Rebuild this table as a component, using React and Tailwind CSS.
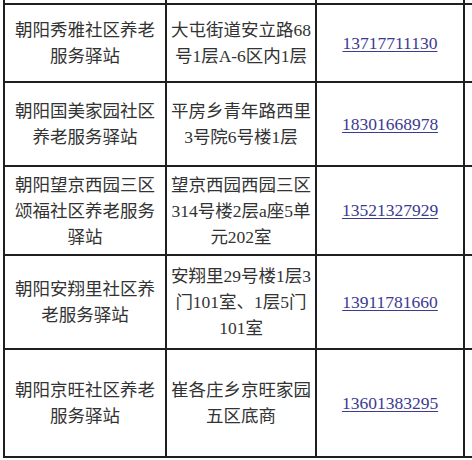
import React from "react";

const rows = [
  {
    h: "h-[78px]",
    name: ["朝阳秀雅社区养老", "服务驿站"],
    addr: ["大屯街道安立路68", "号1层A-6区内1层"],
    phone: "13717711130",
  },
  {
    h: "h-[84px]",
    name: ["朝阳国美家园社区", "养老服务驿站"],
    addr: ["平房乡青年路西里", "3号院6号楼1层"],
    phone: "18301668978",
  },
  {
    h: "h-[89px]",
    name: ["朝阳望京西园三区", "颂福社区养老服务", "驿站"],
    addr: ["望京西园西园三区", "314号楼2层a座5单", "元202室"],
    phone: "13521327929",
  },
  {
    h: "h-[94px]",
    name: ["朝阳安翔里社区养", "老服务驿站"],
    addr: ["安翔里29号楼1层3", "门101室、1层5门", "101室"],
    phone: "13911781660",
  },
  {
    h: "h-[108px]",
    name: ["朝阳京旺社区养老", "服务驿站"],
    addr: ["崔各庄乡京旺家园", "五区底商"],
    phone: "13601383295",
  },
];

const cell = "border-l-2 border-b-2 border-[#1f1f1f] flex flex-col items-center justify-center text-center";

function Lines({ lines }) {
  return lines.map((l, i) => (
    <div key={i} className="whitespace-nowrap leading-[26px]">
      {l}
    </div>
  ));
}

export default function App() {
  return (
    <div
      className="w-[472px] h-[460px] bg-white overflow-hidden pl-[3px] text-[#333] text-[17.5px]"
      style={{ fontFamily: '"Liberation Serif", "Noto Sans CJK SC", serif' }}
    >
      <div className="flex h-[5px]">
        <div className={`${cell} w-[162px]`} />
        <div className={`${cell} w-[150px]`} />
        <div className={`${cell} w-[148px]`} />
        <div className={`${cell} flex-1`} />
      </div>
      {rows.map((r, i) => (
        <div key={i} className={`flex ${r.h}`}>
          <div className={`${cell} w-[162px]`}>
            <Lines lines={r.name} />
          </div>
          <div className={`${cell} w-[150px]`}>
            <Lines lines={r.addr} />
          </div>
          <div className={`${cell} w-[148px]`}>
            <span className="text-[#3b3b8f] underline underline-offset-2 decoration-1">
              {r.phone}
            </span>
          </div>
          <div className={`${cell} flex-1`} />
        </div>
      ))}
    </div>
  );
}
